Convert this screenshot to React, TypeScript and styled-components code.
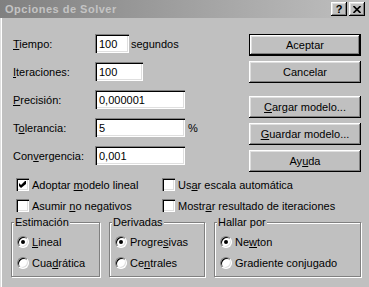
import React from 'react';
import styled, { createGlobalStyle } from 'styled-components';

const Global = createGlobalStyle`
  html, body { margin: 0; padding: 0; background: #c0c0c0; }
  body { font-family: "Liberation Sans", Arial, sans-serif; font-size: 11px; color: #000; }
`;

const Window = styled.div`
  width: 369px;
  height: 287px;
  overflow: hidden;
  background: #c0c0c0;
  display: flex;
  flex-direction: column;
  box-shadow: inset 1px 0 #dfdfdf, inset 2px 0 #fff;
`;

const TitleBar = styled.div`
  height: 18px;
  flex: none;
  display: flex;
  align-items: center;
  justify-content: space-between;
  padding: 0 4px 0 5px;
  background: linear-gradient(to right, #808080, #c0c0c0);
`;

const Title = styled.span`
  font-weight: bold;
  font-size: 11px;
  color: #c4c4c4;
  letter-spacing: 0.5px;
`;

const CaptionButtons = styled.div`
  display: flex;
  gap: 2px;
`;

const CaptionButton = styled.div`
  width: 16px;
  height: 14px;
  box-sizing: border-box;
  background: #c0c0c0;
  box-shadow: inset -1px -1px #000, inset 1px 1px #fff, inset -2px -2px #808080, inset 2px 2px #dfdfdf;
  display: flex;
  align-items: center;
  justify-content: center;
  font-weight: bold;
  font-size: 11px;
  line-height: 1;
`;

const Content = styled.div`
  display: flex;
  flex-direction: column;
  padding-top: 16px;
`;

const TopSection = styled.div`
  display: flex;
  justify-content: space-between;
  height: 141px;
`;

const Fields = styled.div`
  display: flex;
  flex-direction: column;
  gap: 9px;
  padding-left: 13px;
`;

const FieldRow = styled.div`
  display: flex;
  align-items: center;
  height: 19px;
`;

const FieldLabel = styled.span`
  width: 82px;
`;

const TextBox = styled.div<{ $w: number }>`
  width: ${(p) => p.$w}px;
  height: 19px;
  box-sizing: border-box;
  background: #fff;
  box-shadow: inset 1px 1px #808080, inset 2px 2px #000, inset -1px -1px #fff, inset -2px -2px #dfdfdf;
  padding-left: 4px;
  display: flex;
  align-items: center;
`;

const Unit = styled.span<{ $gap: number }>`
  margin-left: ${(p) => p.$gap}px;
`;

const ButtonColumn = styled.div`
  display: flex;
  flex-direction: column;
  gap: 13px;
  margin-right: 8px;
`;

const ButtonGroup = styled.div`
  display: flex;
  flex-direction: column;
  gap: 5px;
`;

const Button = styled.div<{ $default?: boolean }>`
  width: 112px;
  height: 22px;
  box-sizing: border-box;
  display: flex;
  align-items: center;
  justify-content: center;
  background: #c0c0c0;
  border: ${(p) => (p.$default ? '1px solid #000' : 'none')};
  box-shadow: inset -1px -1px #000, inset 1px 1px #fff, inset -2px -2px #808080, inset 2px 2px #dfdfdf;
`;

const Checks = styled.div`
  display: grid;
  grid-template-columns: 146px auto;
  row-gap: 8px;
  padding-left: 16px;
  margin-top: 3px;
`;

const CheckItem = styled.label`
  display: flex;
  align-items: center;
  gap: 3px;
  height: 13px;
`;

const CheckBox = styled.span`
  width: 13px;
  height: 13px;
  box-sizing: border-box;
  background: #fff;
  box-shadow: inset 1px 1px #808080, inset 2px 2px #000, inset -1px -1px #fff, inset -2px -2px #dfdfdf;
  display: flex;
  align-items: center;
  justify-content: center;
`;

const Groups = styled.div`
  display: flex;
  gap: 9px;
  padding-left: 11px;
  margin-top: 4px;
`;

const Group = styled.fieldset<{ $w: number }>`
  width: ${(p) => p.$w}px;
  height: 61px;
  box-sizing: border-box;
  margin: 0;
  padding: 6px 0 0 5px;
  border: 1px solid #808080;
  box-shadow: inset 1px 1px #fff, 1px 1px #fff;
  display: flex;
  flex-direction: column;
  gap: 8px;
`;

const Legend = styled.legend`
  margin-left: -3px;
  padding: 0 1px;
  line-height: 13px;
  background: #c0c0c0;
`;

const RadioItem = styled.label`
  display: flex;
  align-items: center;
  gap: 3px;
  height: 13px;
`;

const Radio = styled.span<{ $checked?: boolean }>`
  position: relative;
  width: 12px;
  height: 12px;
  box-sizing: border-box;
  border-radius: 50%;
  background: #fff;
  border: 1px solid;
  border-color: #808080 #fff #fff #808080;
  box-shadow: inset 1px 1px #000, inset -1px -1px #dfdfdf;
  &::after {
    content: '';
    display: ${(p) => (p.$checked ? 'block' : 'none')};
    position: absolute;
    left: 3px;
    top: 3px;
    width: 4px;
    height: 4px;
    border-radius: 50%;
    background: #000;
  }
`;

const U = styled.u`
  text-decoration: underline;
  text-underline-offset: 1px;
`;

const Check = () => (
  <svg width="7" height="7" viewBox="0 0 7 7">
    <path d="M0 2 L2 4 L6 0 L7 0 L7 3 L2 7 L0 5 Z" fill="#000" />
  </svg>
);

const CloseGlyph = () => (
  <svg width="8" height="7" viewBox="0 0 8 7">
    <path d="M0.5 0 L7.5 7 M7.5 0 L0.5 7" stroke="#000" strokeWidth="1.6" />
  </svg>
);

export default function App() {
  return (
    <>
      <Global />
      <Window>
        <TitleBar>
          <Title>Opciones de Solver</Title>
          <CaptionButtons>
            <CaptionButton>?</CaptionButton>
            <CaptionButton>
              <CloseGlyph />
            </CaptionButton>
          </CaptionButtons>
        </TitleBar>
        <Content>
          <TopSection>
            <Fields>
              <FieldRow>
                <FieldLabel><U>T</U>iempo:</FieldLabel>
                <TextBox $w={34}>100</TextBox>
                <Unit $gap={2}>segundos</Unit>
              </FieldRow>
              <FieldRow>
                <FieldLabel><U>I</U>teraciones:</FieldLabel>
                <TextBox $w={48}>100</TextBox>
              </FieldRow>
              <FieldRow>
                <FieldLabel><U>P</U>recisión:</FieldLabel>
                <TextBox $w={90}>0,000001</TextBox>
              </FieldRow>
              <FieldRow>
                <FieldLabel>T<U>o</U>lerancia:</FieldLabel>
                <TextBox $w={90}>5</TextBox>
                <Unit $gap={3}>%</Unit>
              </FieldRow>
              <FieldRow>
                <FieldLabel>Con<U>v</U>ergencia:</FieldLabel>
                <TextBox $w={90}>0,001</TextBox>
              </FieldRow>
            </Fields>
            <ButtonColumn>
              <ButtonGroup>
                <Button $default>Aceptar</Button>
                <Button>Cancelar</Button>
              </ButtonGroup>
              <ButtonGroup>
                <Button><U>C</U>argar modelo...</Button>
                <Button><U>G</U>uardar modelo...</Button>
                <Button>Ay<U>u</U>da</Button>
              </ButtonGroup>
            </ButtonColumn>
          </TopSection>
          <Checks>
            <CheckItem>
              <CheckBox><Check /></CheckBox>
              <span>Adoptar <U>m</U>odelo lineal</span>
            </CheckItem>
            <CheckItem>
              <CheckBox />
              <span>Us<U>a</U>r escala automática</span>
            </CheckItem>
            <CheckItem>
              <CheckBox />
              <span>Asumir <U>n</U>o negativos</span>
            </CheckItem>
            <CheckItem>
              <CheckBox />
              <span>Mostr<U>a</U>r resultado de iteraciones</span>
            </CheckItem>
          </Checks>
          <Groups>
            <Group $w={89}>
              <Legend>Estimación</Legend>
              <RadioItem><Radio $checked /><span><U>L</U>ineal</span></RadioItem>
              <RadioItem><Radio /><span>Cua<U>d</U>rática</span></RadioItem>
            </Group>
            <Group $w={96}>
              <Legend>Derivadas</Legend>
              <RadioItem><Radio $checked /><span>Progre<U>s</U>ivas</span></RadioItem>
              <RadioItem><Radio /><span>Ce<U>n</U>trales</span></RadioItem>
            </Group>
            <Group $w={147}>
              <Legend>Hallar por</Legend>
              <RadioItem><Radio $checked /><span>Ne<U>w</U>ton</span></RadioItem>
              <RadioItem><Radio /><span>Gradiente con<U>j</U>ugado</span></RadioItem>
            </Group>
          </Groups>
        </Content>
      </Window>
    </>
  );
}
